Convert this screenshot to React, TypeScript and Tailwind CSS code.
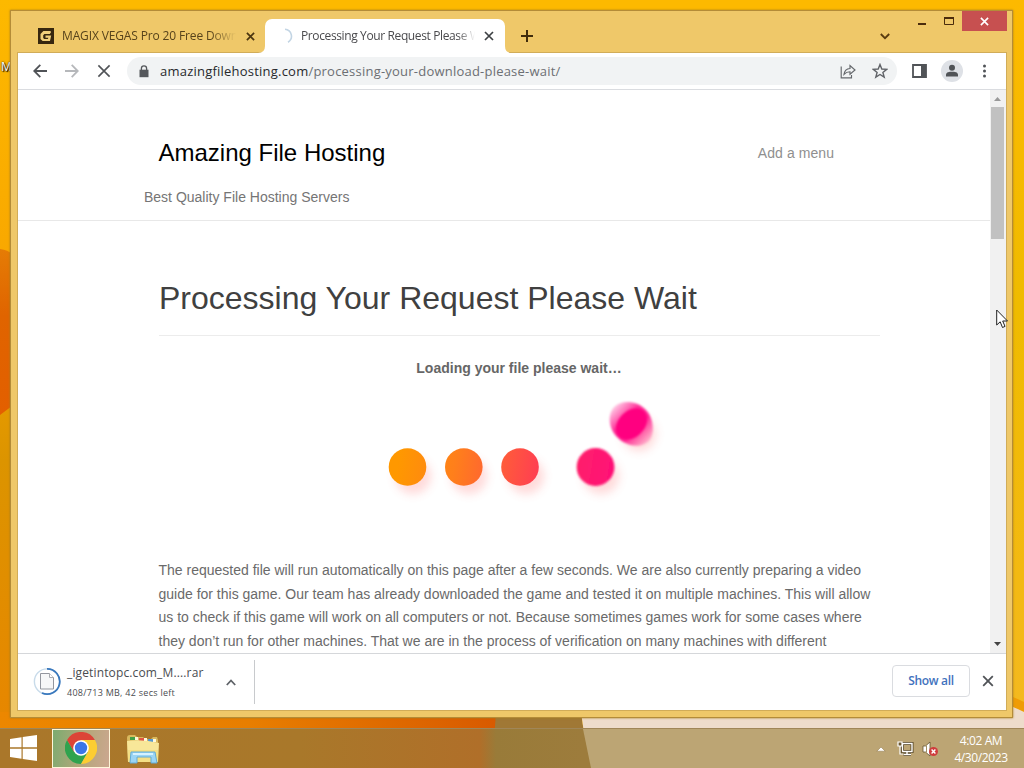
import React from "react";

const ui = "font-['Open_Sans','Noto_Sans',sans-serif]";

function Wallpaper() {
  return (
    <svg className="absolute inset-0" width="1024" height="768" viewBox="0 0 1024 768">
      <defs>
        <linearGradient id="left" x1="0" y1="0" x2="0" y2="1">
          <stop offset="0" stopColor="#fdb900" />
          <stop offset="0.33" stopColor="#f9a800" />
          <stop offset="0.6" stopColor="#dc9400" />
          <stop offset="1" stopColor="#e98400" />
        </linearGradient>
        <linearGradient id="blob" x1="0" y1="0" x2="0" y2="1">
          <stop offset="0" stopColor="#e57c05" />
          <stop offset="0.4" stopColor="#e06400" />
          <stop offset="1" stopColor="#e35f00" />
        </linearGradient>
        <linearGradient id="strip" x1="0" y1="0" x2="1" y2="0">
          <stop offset="0" stopColor="#ec8700" />
          <stop offset="0.5" stopColor="#e87e00" />
          <stop offset="1" stopColor="#d85a00" />
        </linearGradient>
        <linearGradient id="right" x1="0" y1="0" x2="0" y2="1">
          <stop offset="0" stopColor="#fdb900" />
          <stop offset="0.4" stopColor="#efbb00" />
          <stop offset="0.75" stopColor="#f3b912" />
          <stop offset="1" stopColor="#f4b925" />
        </linearGradient>
      </defs>
      <rect width="1024" height="768" fill="#fdb900" />
      <rect width="20" height="768" fill="url(#left)" />
      <path d="M0 249 Q8 250 12 254 V406 L0 415Z" fill="url(#blob)" />
      <rect x="1004" width="20" height="768" fill="url(#right)" />
      <rect y="712" width="498" height="20" fill="url(#strip)" />
      <path d="M496 712H581L589 768H492Z" fill="#a07835" />
      <path d="M581 712H1024V768H589Z" fill="#eedccb" />
      <path d="M1013 697L1024 702V712L1013 707Z" fill="#ef9c06" />
      <path d="M1013 707L1024 712V729H1004V707Z" fill="#eedccb" />
    </svg>
  );
}

function CloseX({ size, color, w }: { size: number; color: string; w: number }) {
  return (
    <svg width={size} height={size} viewBox="0 0 10 10" className="shrink-0">
      <path d="M1 1L9 9M9 1L1 9" stroke={color} strokeWidth={w} fill="none" />
    </svg>
  );
}

function TabStrip() {
  return (
    <div className="-mr-px flex h-[42px] shrink-0">
      <div className="flex w-[247px] items-center pt-[8px] pl-5">
        <svg width="16" height="16" viewBox="0 0 16 16" className="shrink-0">
          <rect width="16" height="16" fill="#37270f" />
          <path d="M13 4.3L11.8 6H6.4L5.2 7.2V10L6.2 11H9.8L10.4 9.8H7.5V7.5H13.2L12 13H4.6L2.5 11V6L5.4 3H12.5Z" fill="#f0cf7b" />
        </svg>
        <div className="ml-2 w-[174px] overflow-hidden text-[12px] leading-4 tracking-[-0.14px] whitespace-nowrap text-[#57431b] [mask-image:linear-gradient(to_right,#000_85%,transparent)]">
          MAGIX VEGAS Pro 20 Free Download
        </div>
        <div className="ml-[10px] flex"><CloseX size={9} color="#4b3510" w={1.9} /></div>
      </div>
      <div className="relative mt-[8px] flex h-[34px] w-[240px] items-center rounded-t-[7px] bg-white pl-3">
        <svg className="absolute bottom-0 -left-[7px]" width="7" height="7"><path d="M7 0V7H0Q7 7 7 0Z" fill="#fff" /></svg>
        <svg className="absolute -right-[7px] bottom-0" width="7" height="7"><path d="M0 0V7H7Q0 7 0 0Z" fill="#fff" /></svg>
        <svg width="16" height="16" viewBox="0 0 16 16" className="shrink-0">
          <path d="M8 1.2A7 7 0 0 1 11 14.2" fill="none" stroke="#c3d5e4" strokeWidth="1.6" />
        </svg>
        <div className="ml-2 w-[174px] overflow-hidden text-[12px] leading-4 tracking-[-0.38px] whitespace-nowrap text-[#4a4a4d] [mask-image:linear-gradient(to_right,#000_90%,transparent)]">
          Processing Your Request Please Wait
        </div>
        <div className="ml-[9px] flex"><CloseX size={10} color="#3d4043" w={1.7} /></div>
      </div>
      <div className="flex flex-1 pt-[19px] pl-4">
        <svg width="12" height="12"><path d="M6 0V12M0 6H12" stroke="#402c0b" strokeWidth="2" /></svg>
      </div>
      <svg className="mt-[22px] mr-[28px]" width="10" height="7"><path d="M.8 1L5 5.2L9.2 1" fill="none" stroke="#593c10" strokeWidth="1.8" /></svg>
      <svg className="mt-[12px] mr-[18px]" width="8" height="3"><rect y="0" width="8" height="2" fill="#4b2c0c" /></svg>
      <svg className="mt-[6px] mr-2" width="10" height="9"><path d="M.5 1H9.5V7.5H.5Z" fill="none" stroke="#4b2c0c" /><path d="M0 1H10" stroke="#4b2c0c" strokeWidth="2" /></svg>
      <div className="flex h-[20px] w-[45px] items-center justify-center bg-[#c75050]"><CloseX size={9} color="#fff" w={1.8} /></div>
    </div>
  );
}

function Toolbar() {
  return (
    <div className="flex h-[37px] shrink-0 items-center border-b border-[#dadce0] bg-white pl-[15px]">
      <svg width="14" height="14" className="shrink-0"><path d="M14 7H1.5M7.3 .8L1.2 7L7.3 13.2" fill="none" stroke="#505357" strokeWidth="1.8" /></svg>
      <svg width="14" height="14" className="ml-[18px] shrink-0"><path d="M0 7H12.5M6.7 .8L12.8 7L6.7 13.2" fill="none" stroke="#b6b8bb" strokeWidth="1.8" /></svg>
      <div className="ml-[18px] flex"><CloseX size={14} color="#505357" w={1.15} /></div>
      <div className="ml-[16px] flex h-7 w-[770px] items-center rounded-full bg-[#f1f3f4] pr-[9px] pl-3">
        <svg width="10" height="13" viewBox="0 0 10 13" className="shrink-0">
          <path d="M0.5 4.7H9.5V12.2H.5Z" fill="#55585c" />
          <path d="M2.4 5V3.5A2.6 2.6 0 0 1 7.6 3.5V5" fill="none" stroke="#55585c" strokeWidth="1.3" />
        </svg>
        <div className="ml-[11px] flex-1 pt-[2px] text-[13px] tracking-[0.22px] whitespace-nowrap text-[#6c6f73]">
          <span className="text-[#27292c]">amazingfilehosting.com</span>/processing-your-download-please-wait/
        </div>
        <svg width="16" height="15" viewBox="0 0 16 15" fill="none" stroke="#65686c" strokeWidth="1.15">
          <path d="M1.2 2.5V13.8H11.5V11" />
          <path d="M4 10.3C4.5 6.5 6.5 4.8 10 4.5V1.6L15 6L10 10.3V7.7C7.3 7.7 5.6 8.5 4 10.3Z" />
        </svg>
        <svg className="ml-4" width="16" height="16" viewBox="0 0 16 16"><path d="M8 1.5L9.8 6L14.7 6.3L10.9 9.4L12.2 14.1L8 11.5L3.8 14.1L5.1 9.4L1.3 6.3L6.2 6Z" fill="none" stroke="#606368" strokeWidth="1.4" /></svg>
      </div>
      <svg className="ml-[15px]" width="15" height="14"><path d="M1 1H14V13H1Z" fill="none" stroke="#505357" strokeWidth="1.8" /><path d="M9 1H14V13H9Z" fill="#505357" /></svg>
      <svg className="ml-[14px]" width="22" height="22"><circle cx="11" cy="11" r="11" fill="#dee1e6" /><circle cx="11" cy="7.8" r="3" fill="#505357" /><path d="M5 16.5V15C5 12 8.5 11.8 11 11.8S17 12 17 15V16.5Z" fill="#505357" /></svg>
      <svg className="ml-[19px]" width="4" height="14" fill="#505357"><circle cx="2.5" cy="2" r="1.5" /><circle cx="2.5" cy="7" r="1.5" /><circle cx="2.5" cy="12" r="1.5" /></svg>
    </div>
  );
}

function Loader() {
  return (
    <svg className="block" width="300" height="130" viewBox="380 390 300 130">
      <defs>
        <linearGradient id="ball" gradientUnits="userSpaceOnUse" x1="400" y1="450" x2="622" y2="486">
          <stop offset="0" stopColor="#ff9800" />
          <stop offset="0.25" stopColor="#ff7f1b" />
          <stop offset="0.5" stopColor="#ff5440" />
          <stop offset="0.8" stopColor="#ff1f6c" />
          <stop offset="1" stopColor="#ff0a79" />
        </linearGradient>
        <linearGradient id="smear" x1="0" y1="0" x2="1" y2="1">
          <stop offset="0.08" stopColor="#ff0080" stopOpacity="0.15" />
          <stop offset="0.38" stopColor="#ff0080" stopOpacity="0.8" />
          <stop offset="0.62" stopColor="#ff0080" stopOpacity="0.8" />
          <stop offset="0.92" stopColor="#ff0080" stopOpacity="0.15" />
        </linearGradient>
        <filter id="shade" x="-50%" y="-50%" width="200%" height="200%"><feGaussianBlur stdDeviation="5" /></filter>
        <filter id="soft"><feGaussianBlur stdDeviation="0.8" /></filter>
      </defs>
      <g fill="#ff5a5a" opacity="0.22" filter="url(#shade)">
        <circle cx="413" cy="476" r="18" /><circle cx="469" cy="476" r="18" /><circle cx="526" cy="476" r="18" /><circle cx="601" cy="476" r="18" /><circle cx="639" cy="434" r="17" />
      </g>
      <g fill="url(#ball)">
        <circle cx="407.5" cy="467" r="18.8" /><circle cx="463.8" cy="467" r="18.8" /><circle cx="520" cy="467" r="18.8" />
        <circle cx="595.5" cy="467" r="18.9" filter="url(#soft)" />
      </g>
      <g filter="url(#soft)">
        <path d="M614 407C622 399 637 401 645 409C653 416 656 433 649 441C641 449 626 446 618 438C610 431 606 416 614 407Z" fill="url(#smear)" />
        <ellipse cx="631.5" cy="424" rx="18" ry="13" fill="#ff0080" transform="rotate(-45 631.5 424)" />
      </g>
    </svg>
  );
}

const paragraph = [
  "The requested file will run automatically on this page after a few seconds. We are also currently preparing a video",
  "guide for this game. Our team has already downloaded the game and tested it on multiple machines. This will allow",
  "us to check if this game will work on all computers or not. Because sometimes games work for some cases where",
  "they don’t run for other machines. That we are in the process of verification on many machines with different",
];

function Page() {
  return (
    <div className="flex h-[563px] shrink-0 overflow-hidden bg-white font-['Liberation_Sans',sans-serif]">
      <main className="w-[972px]">
        <header className="h-[131px] border-b border-[#e8e8e8]">
          <div className="flex items-center justify-between pt-[45px] pr-[156px] pl-[140.5px]">
            <h1 className="text-[24px] leading-9 text-black">Amazing File Hosting</h1>
            <span className="text-[14px] tracking-[0.07px] text-[#8f8f8f]">Add a menu</span>
          </div>
          <p className="mt-[16px] ml-[126px] text-[14px] leading-5 text-[#757575]">Best Quality File Hosting Servers</p>
        </header>
        <div className="ml-[141px] w-[721px]">
          <h2 className="h-[115px] border-b border-[#ececec] pt-[55px] text-[32px] leading-[44px] whitespace-nowrap text-[#404040]">Processing Your Request Please Wait</h2>
          <p className="mt-[22px] -ml-[1px] text-center text-[14px] leading-5 font-bold text-[#666]">Loading your file please wait…</p>
          <div className="mt-[12px] pl-[221px]"><Loader /></div>
          <div className="mt-[39px] -ml-[0.5px] text-[14px] leading-[23.7px] whitespace-nowrap text-[#6a6a6a]">
            {paragraph.map((line) => <div key={line}>{line}</div>)}
          </div>
        </div>
      </main>
      <div className="flex w-4 flex-col bg-[#f1f1f1]">
        <svg width="16" height="17" className="shrink-0"><path d="M4 11L7.5 7L11 11Z" fill="#999" /></svg>
        <div className="ml-[1px] h-[132px] w-[13px] shrink-0 bg-[#c1c1c1]" />
        <div className="flex-1" />
        <svg width="16" height="17" className="shrink-0"><path d="M4 6L7.5 10L11 6Z" fill="#444" /></svg>
      </div>
    </div>
  );
}

function Downloads() {
  return (
    <div className="flex h-[57px] shrink-0 items-center border-t border-[#d5d7da] bg-white pl-[15px]">
      <svg width="28" height="28" viewBox="0 0 28 28" className="shrink-0">
        <circle cx="14" cy="13.5" r="12.6" fill="none" stroke="#c8dbea" strokeWidth="1.4" />
        <path d="M14 .9A12.6 12.6 0 1 1 9 25" fill="none" stroke="#3978bd" strokeWidth="1.8" />
        <path d="M7.5 5.5H16.5L20.5 9.5V21H7.5Z" fill="#f6f7f8" stroke="#93969e" /><path d="M16.5 5.5V9.5H20.5" fill="#fff" stroke="#a9abb1" />
      </svg>
      <div className="ml-[6px] w-[148px] whitespace-nowrap">
        <div className="text-[12px] leading-[18px] tracking-[0.14px] text-[#4a4c50]">_igetintopc.com_M....rar</div>
        <div className="mt-[3px] text-[9px] leading-[15px] tracking-[0.27px] text-[#4a4c50]">408/713 MB, 42 secs left</div>
      </div>
      <svg className="ml-[11px]" width="10" height="7"><path d="M.8 6L5 1.5L9.2 6" fill="none" stroke="#5f6368" strokeWidth="1.8" /></svg>
      <div className="ml-[18px] h-[44px] w-px bg-[#c8cacd]" />
      <div className="flex-1" />
      <button className="mb-[2px] h-8 w-[78px] rounded-[4px] border border-[#dadce0] text-[12px] font-semibold tracking-[-0.3px] text-[#4272bd]">Show all</button>
      <div className="mr-[12px] mb-[2px] ml-[12px] flex"><CloseX size={12} color="#505357" w={1.5} /></div>
    </div>
  );
}

function ChromeLogo() {
  return (
    <svg width="32" height="32" viewBox="0 0 32 32">
      <path d="M9.1 20L2.1 8A16 16 0 0 0 16 32L22.9 20Z" fill="#2fa34e" />
      <path d="M16 8H29.9A16 16 0 0 1 16 32L22.9 20Z" fill="#fccd32" />
      <path d="M2.1 8L9.1 20L16 8H29.9A16 16 0 0 0 2.1 8Z" fill="#dc4437" />
      <circle cx="16" cy="16" r="7.8" fill="#fff" /><circle cx="16" cy="16" r="6.2" fill="#3b76e8" />
    </svg>
  );
}

function Explorer() {
  return (
    <svg width="34" height="32" viewBox="0 0 34 32">
      <path d="M1 4Q1 1 4 1H9L11 3H17L19 5H25L27 3H31L32 6V27H2Z" fill="#d9b95e" />
      <path d="M4 3H9V6H4Z" fill="#43a047" /><path d="M13 4H18V7H13Z" fill="#e05545" /><path d="M22 5H27V8H22Z" fill="#5899ce" />
      <path d="M9 3H12V6H9ZM18 4H21V7H18ZM27 5H30V8H27Z" fill="#fff9dc" />
      <path d="M1 7Q17 5 33 9L32 28H2Z" fill="#f8e799" /><path d="M2 16H32V28H2Z" fill="#f2da78" opacity=".6" />
      <path d="M5 18H29L31 29H25V23H11V29H4Z" fill="#9bd5f5" stroke="#62acd5" />
      <path d="M7 20H27" stroke="#d5f2ff" strokeWidth="2" />
    </svg>
  );
}

function Taskbar() {
  return (
    <div className="absolute inset-x-0 bottom-0 isolate flex h-10 items-center border-t border-[#a08658] bg-[linear-gradient(90deg,#aa772a_0,#a9782a_300px,#b06f29_480px,#997b39_496px,#9d7c3c_582px)]">
      <svg className="absolute top-0 left-0 -z-10" width="1024" height="39"><path d="M583 0H1024V39H591Z" fill="#bca574" /></svg>
      <svg className="mb-[2px] ml-[10px]" width="27" height="26" viewBox="0 0 27 26" fill="#fff"><path d="M0 4L11.5 2.3V12.3H0ZM12.7 2.1L27 0V12.3H12.7ZM0 13.7H11.5V23.7L0 22ZM12.7 13.7H27V26L12.7 23.9Z" /></svg>
      <div className="ml-[15px] flex h-[39px] w-[58px] items-center justify-center border border-[#fff7da] bg-[linear-gradient(100deg,#7cab70,#b5a77a_55%,#cca790)] pb-[2px]"><ChromeLogo /></div>
      <div className="ml-[16px] pt-[2px]"><Explorer /></div>
      <div className="flex-1" />
      <svg className="mr-[11px]" width="10" height="6"><path d="M.8 5.2L5 1L9.2 5.2Z" fill="#fff" stroke="#8a7245" strokeWidth=".5" /></svg>
      <svg className="mr-[8px]" width="17" height="16" viewBox="0 0 17 16">
        <path d="M5.5 2.5H15V10.5H5.5ZM10 10.5V13M6.5 13.5H14" fill="none" stroke="#51401f" strokeWidth="3" />
        <path d="M5.5 2.5H15V10.5H5.5ZM10 10.5V13M6.5 13.5H14" fill="none" stroke="#fff" strokeWidth="1.4" />
        <path d="M1 1H5V5H1ZM3 5V13H6" fill="#6b5730" stroke="#fff" strokeWidth="1.2" />
      </svg>
      <svg className="mr-[14px]" width="17" height="16" viewBox="0 0 17 16">
        <path d="M1 5H3.5L8 1V15L3.5 11H1Z" fill="#fff" stroke="#66542f" strokeWidth=".8" /><path d="M4.5 4.5V11.5" stroke="#a19064" />
        <circle cx="11.5" cy="10.5" r="4.5" fill="#cf3d3d" /><path d="M9.6 8.6L13.4 12.4M13.4 8.6L9.6 12.4" stroke="#fff" strokeWidth="1.4" />
      </svg>
      <div className="mr-[15px] w-[56px] text-center text-[12px] leading-[17px] tracking-[-0.4px] whitespace-nowrap text-white">4:02 AM<br />4/30/2023</div>
    </div>
  );
}

export default function App() {
  return (
    <div className={`relative isolate h-[768px] w-[1024px] overflow-hidden ${ui}`}>
      <Wallpaper />
      <div className="absolute top-[60px] left-[1px] text-[12px] leading-[14px] text-white [text-shadow:1px_1px_1px_#000,0_0_2px_#000]">M</div>
      <div className="absolute top-[10px] left-[10px] flex h-[708px] w-[1003px] flex-col border border-[#b48c38] bg-[#efc869] pr-[6px] pb-[7px] pl-[7px] shadow-[0_0_2px_#a67c1c]">
        <TabStrip />
        <div className="flex flex-col outline-1 outline-[#d1ac58]">
          <Toolbar />
          <Page />
          <Downloads />
        </div>
      </div>
      <Taskbar />
      <svg className="absolute top-[309px] left-[996px]" width="13" height="20"><path d="M.7 1V16L4.2 12.8L6.5 18.5L9 17.4L6.7 12H11.5Z" fill="#fff" stroke="#222" /></svg>
    </div>
  );
}
